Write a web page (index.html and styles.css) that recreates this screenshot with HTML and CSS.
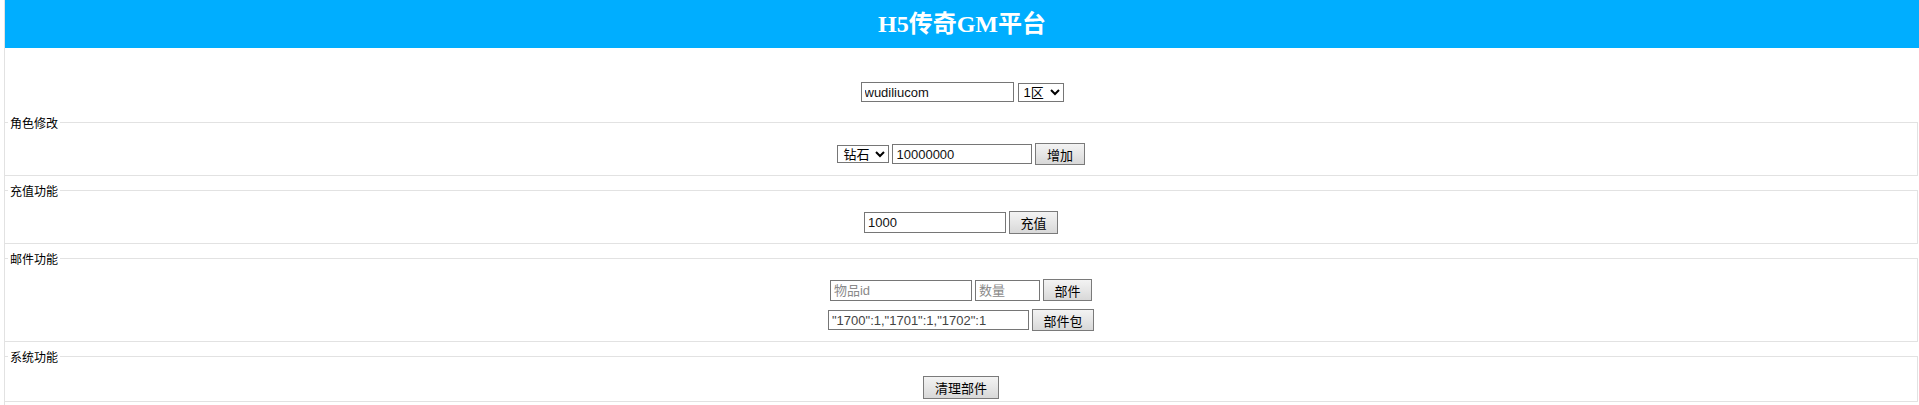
FILE: index.html
```html
<!DOCTYPE html>
<html lang="zh-CN">
<head>
<meta charset="utf-8">
<title>H5传奇GM平台</title>
<link rel="stylesheet" href="styles.css">
</head>
<body>
<div class="page">
  <header class="topbar"><h1 class="title">H5传奇GM平台</h1></header>

  <div class="login">
    <div class="row gap4">
      <input class="ipt w153 h20" type="text" value="wudiliucom">
      <select class="sel w46 h19"><option>1区</option></select>
    </div>
  </div>

  <fieldset class="box">
    <legend class="lg">角色修改</legend>
    <div class="row">
      <select class="sel w52 h18"><option>钻石</option></select>
      <input class="ipt w140 h20" type="text" value="10000000">
      <button class="btn h22" type="button">增加</button>
    </div>
  </fieldset>

  <fieldset class="box">
    <legend class="lg">充值功能</legend>
    <div class="row">
      <input class="ipt w142 h21" type="text" value="1000">
      <button class="btn h23" type="button">充值</button>
    </div>
  </fieldset>

  <fieldset class="box">
    <legend class="lg">邮件功能</legend>
    <div class="row">
      <input class="ipt w142 h21" type="text" placeholder="物品id">
      <input class="ipt w65 h21" type="text" placeholder="数量">
      <button class="btn h22" type="button">部件</button>
    </div>
    <div class="row next">
      <input class="ipt w201 h20 soft" type="text" value="&quot;1700&quot;:1,&quot;1701&quot;:1,&quot;1702&quot;:1">
      <button class="btn h22" type="button">部件包</button>
    </div>
  </fieldset>

  <fieldset class="box last">
    <legend class="lg">系统功能</legend>
    <div class="row first-tight">
      <button class="btn h23" type="button">清理部件</button>
    </div>
  </fieldset>
</div>
</body>
</html>
```

FILE: styles.css
```css
html, body {
  margin: 0;
  padding: 0;
  background: #ffffff;
}

body {
  font-family: "Liberation Sans", "Noto Sans CJK SC", sans-serif;
  font-size: 13px;
  color: #000;
  overflow: hidden;
}

.page {
  margin-left: 4px;
  border-left: 1px solid #e2e2e2;
  min-height: 405px;
}

.topbar {
  height: 48px;
  background: #00aeff;
  display: flex;
  align-items: center;
  justify-content: center;
}

.title {
  margin: 0;
  font-family: "Liberation Serif", "Noto Sans CJK SC", serif;
  font-size: 24px;
  font-weight: bold;
  line-height: 48px;
  color: #ffffff;
}

.login {
  padding-top: 32px;
  padding-bottom: 4px;
}

.row {
  height: 24px;
  display: flex;
  align-items: center;
  justify-content: center;
  gap: 3px;
  margin-top: 12px;
}

.login .row {
  margin-top: 0;
}

.row.gap4 {
  gap: 4px;
}

.row.next {
  margin-top: 6px;
}

.row.first-tight {
  margin-top: 11px;
}

.box {
  margin: 7px 1px 0 -1px;
  padding: 0 3px 9px;
  border: 1px solid #e2e2e2;
  min-width: 0;
}

.box.last {
  padding-bottom: 2px;
}

.lg {
  padding: 0 2px;
  font-family: "Noto Sans CJK SC", "Liberation Sans", sans-serif;
  font-size: 12px;
  line-height: 15px;
  color: #000;
}

.ipt {
  box-sizing: border-box;
  margin: 0;
  padding: 0 3px;
  border: 1px solid #767676;
  border-radius: 0;
  background: #fff;
  font-family: "Liberation Sans", "Noto Sans CJK SC", sans-serif;
  font-size: 13px;
  color: #111;
  outline: none;
}

.ipt::placeholder {
  color: #8a8a8a;
}

.ipt.soft {
  color: #444;
}

.sel {
  box-sizing: border-box;
  margin: 0;
  padding: 0 0 0 1px;
  border: 1px solid #767676;
  border-radius: 0;
  background-color: #fff;
  font-family: "Liberation Sans", "Noto Sans CJK SC", sans-serif;
  font-size: 13px;
  color: #000;
}

.btn {
  box-sizing: border-box;
  margin: 0;
  padding: 0 10.5px;
  border: 1px solid #7a7a7a;
  border-radius: 0;
  background: linear-gradient(#f3f3f3, #e6e6e6 50%, #d8d8d8);
  font-family: "Noto Sans CJK SC", "Liberation Sans", sans-serif;
  font-size: 13px;
  line-height: 1;
  color: #000;
}

.w46 { width: 46px; }
.w52 { width: 52px; }
.w65 { width: 65px; }
.w140 { width: 140px; }
.w142 { width: 142px; }
.w153 { width: 153px; }
.w201 { width: 201px; }

.h18 { height: 18px; }
.h19 { height: 19px; }
.h20 { height: 20px; }
.h21 { height: 21px; }
.h22 { height: 22px; }
.h23 { height: 23px; }
```
